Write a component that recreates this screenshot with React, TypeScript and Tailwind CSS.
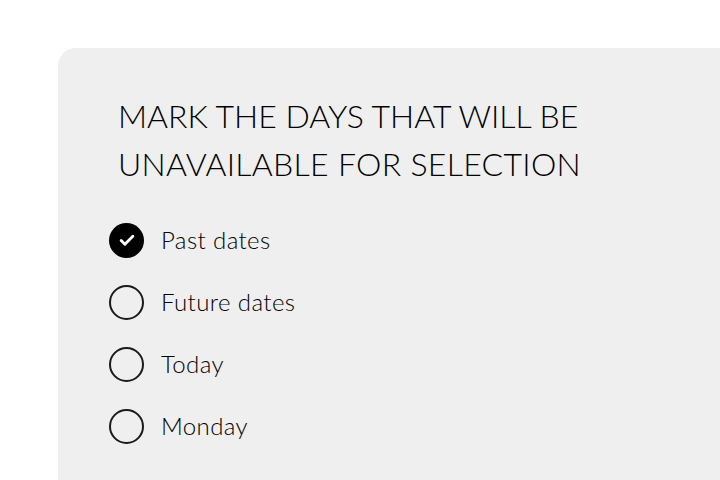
import { useState } from "react";

const options = ["Past dates", "Future dates", "Today", "Monday"];

export default function App() {
  const [checked, setChecked] = useState<string[]>(["Past dates"]);

  const toggle = (opt: string) =>
    setChecked((prev) =>
      prev.includes(opt) ? prev.filter((o) => o !== opt) : [...prev, opt]
    );

  return (
    <div
      className="h-[480px] overflow-hidden bg-white pl-[58px] pt-[48px] text-black"
      style={{ fontFamily: "Lato, 'Noto Sans', sans-serif" }}
    >
      <div className="h-[480px] rounded-tl-[18px] bg-[#efefef] pt-[44px]">
        {/* Heading */}
        <h1 className="pl-[60px] text-[32px] leading-[48px] font-light uppercase">
          Mark the days that will be
          <br />
          <span className="tracking-[0.3px]">unavailable for selection</span>
        </h1>

        {/* Options */}
        <div className="mt-[21px] flex flex-col pl-[51px]">
          {options.map((opt) => {
            const on = checked.includes(opt);
            return (
              <button
                key={opt}
                onClick={() => toggle(opt)}
                className="flex h-[62px] items-center gap-[17px] text-left"
              >
                {on ? (
                  <span className="flex h-[35px] w-[35px] items-center justify-center rounded-full bg-black">
                    <svg width="20" height="20" viewBox="0 0 24 24" fill="none">
                      <path
                        d="M5 12.5l4.5 4.5L19 7.5"
                        stroke="white"
                        strokeWidth="3.4"
                        strokeLinecap="round"
                        strokeLinejoin="round"
                      />
                    </svg>
                  </span>
                ) : (
                  <span className="h-[35px] w-[35px] rounded-full border-2 border-[#1a1a1a]" />
                )}
                <span className="text-[24px] font-light leading-none tracking-[0.4px]">
                  {opt}
                </span>
              </button>
            );
          })}
        </div>
      </div>
    </div>
  );
}
